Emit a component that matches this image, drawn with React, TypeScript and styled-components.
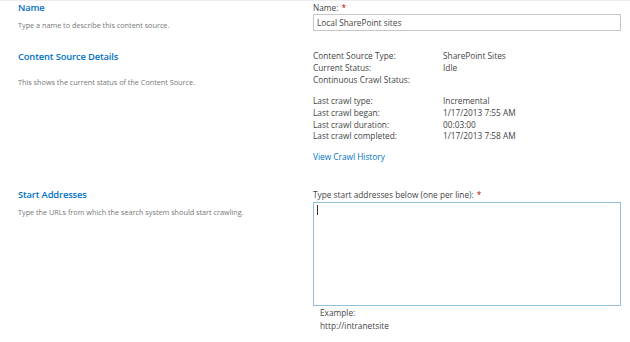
import React from 'react';
import styled, { createGlobalStyle } from 'styled-components';

const GlobalStyle = createGlobalStyle`
  html, body {
    margin: 0;
    padding: 0;
    background: #fff;
  }
  body {
    font-family: "Open Sans", "Noto Sans", "Liberation Sans", sans-serif;
    color: #444;
  }
`;

const Page = styled.div`
  width: 630px;
  height: 342px;
  border-top: 1px solid #ededed;
  box-sizing: border-box;
  overflow: hidden;
`;

const Section = styled.section<{ $top: number }>`
  display: grid;
  grid-template-columns: 295px 308px;
  align-items: start;
  padding-left: 18px;
  margin-top: ${(p) => p.$top}px;
`;

const Heading = styled.h3`
  margin: 0;
  font-size: 9.4px;
  line-height: 14px;
  font-weight: 600;
  color: #0072c6;
  letter-spacing: -0.15px;
`;

const Description = styled.p<{ $gap: number }>`
  margin: ${(p) => p.$gap}px 0 0;
  font-size: 7.3px;
  line-height: 12px;
  color: #777;
  letter-spacing: -0.02px;
`;

const Field = styled.div<{ $pad?: number }>`
  display: flex;
  flex-direction: column;
  align-items: flex-start;
  padding-top: ${(p) => p.$pad ?? 0}px;
`;

const Label = styled.label`
  font-size: 8.3px;
  line-height: 12px;
  color: #444;
`;

const Required = styled.span`
  color: #bf0000;
  margin-left: 3px;
`;

const TextInput = styled.input`
  box-sizing: border-box;
  width: 308px;
  height: 17px;
  margin: 0;
  padding: 0 3px;
  border: 1px solid #c6c6c6;
  font-family: inherit;
  font-size: 8.3px;
  color: #444;
  outline: none;
`;

const InfoGroup = styled.dl<{ $gap?: number }>`
  display: grid;
  grid-template-columns: 130px 178px;
  margin: ${(p) => p.$gap ?? 0}px 0 0;
  font-size: 8.3px;
  line-height: 11.8px;
`;

const Term = styled.dt`
  margin: 0;
  color: #444;
`;

const Value = styled.dd`
  margin: 0;
  color: #444;
  min-height: 11.8px;
`;

const Link = styled.a`
  margin-top: 9.2px;
  font-size: 8.3px;
  line-height: 12px;
  color: #0072c6;
  text-decoration: none;
`;

const AreaWrap = styled.div`
  position: relative;
  margin-top: 1px;
  width: 308px;
  height: 104px;
`;

const TextArea = styled.textarea`
  box-sizing: border-box;
  display: block;
  width: 100%;
  height: 100%;
  margin: 0;
  border: 1px solid #92c0e0;
  resize: none;
  outline: none;
  caret-color: transparent;
  font-family: inherit;
  font-size: 8.3px;
`;

const Caret = styled.span`
  position: absolute;
  left: 4px;
  top: 3px;
  width: 1px;
  height: 10px;
  background: #333;
`;

const Example = styled.div`
  padding: 0.5px 0 0 7px;
  font-size: 8.3px;
  line-height: 13px;
  color: #444;
`;

const details: [string, string][][] = [
  [
    ['Content Source Type:', 'SharePoint Sites'],
    ['Current Status:', 'Idle'],
    ['Continuous Crawl Status:', ''],
  ],
  [
    ['Last crawl type:', 'Incremental'],
    ['Last crawl began:', '1/17/2013 7:55 AM'],
    ['Last crawl duration:', '00:03:00'],
    ['Last crawl completed:', '1/17/2013 7:58 AM'],
  ],
];

const App = () => {
  return (
    <Page>
      <GlobalStyle />
      <Section $top={0}>
        <div>
          <Heading>Name</Heading>
          <Description $gap={4}>Type a name to describe this content source.</Description>
        </div>
        <Field $pad={1}>
          <Label>
            Name:<Required>*</Required>
          </Label>
          <TextInput defaultValue="Local SharePoint sites" />
        </Field>
      </Section>

      <Section $top={19}>
        <div>
          <Heading>Content Source Details</Heading>
          <Description $gap={12}>This shows the current status of the Content Source.</Description>
        </div>
        <Field>
          {details.map((group, i) => (
            <InfoGroup key={i} $gap={i === 0 ? 0 : 9.6}>
              {group.map(([k, v]) => (
                <React.Fragment key={k}>
                  <Term>{k}</Term>
                  <Value>{v}</Value>
                </React.Fragment>
              ))}
            </InfoGroup>
          ))}
          <Link href="#">View Crawl History</Link>
        </Field>
      </Section>

      <Section $top={24.5}>
        <div>
          <Heading>Start Addresses</Heading>
          <Description $gap={4}>Type the URLs from which the search system should start crawling.</Description>
        </div>
        <Field $pad={1}>
          <Label>
            Type start addresses below (one per line):<Required>*</Required>
          </Label>
          <AreaWrap>
            <TextArea />
            <Caret />
          </AreaWrap>
          <Example>
            Example:
            <br />
            http://intranetsite
          </Example>
        </Field>
      </Section>
    </Page>
  );
};

export default App;
